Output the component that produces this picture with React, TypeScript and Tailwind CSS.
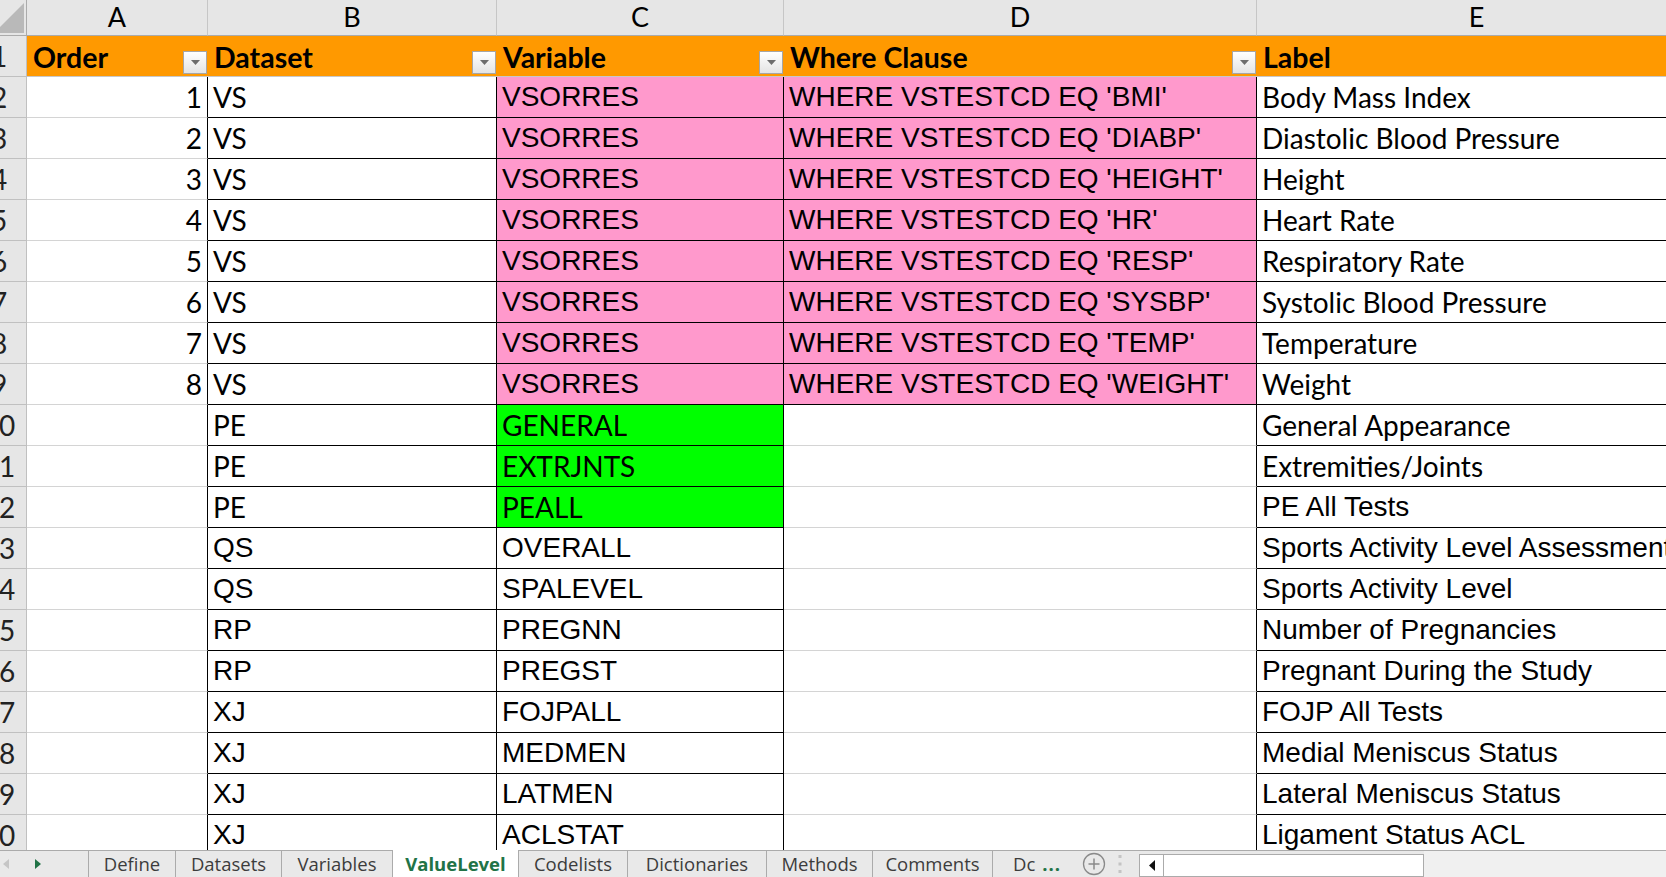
import React from "react";

const CAL = "font-['Lato',sans-serif] text-[28px]";
const ARI = "font-['Liberation_Sans',Arial,sans-serif] text-[28px]";

type F = "c" | "a";
type Row = {
  a?: string;
  b: string;
  c: string;
  d?: string;
  e: string;
  bf: F;
  cf: F;
  ef: F;
  fill?: "pink" | "green";
};

const rows: Row[] = [
  { a: "1", b: "VS", c: "VSORRES", d: "WHERE VSTESTCD EQ 'BMI'", e: "Body Mass Index", bf: "c", cf: "a", ef: "c", fill: "pink" },
  { a: "2", b: "VS", c: "VSORRES", d: "WHERE VSTESTCD EQ 'DIABP'", e: "Diastolic Blood Pressure", bf: "c", cf: "a", ef: "c", fill: "pink" },
  { a: "3", b: "VS", c: "VSORRES", d: "WHERE VSTESTCD EQ 'HEIGHT'", e: "Height", bf: "c", cf: "a", ef: "c", fill: "pink" },
  { a: "4", b: "VS", c: "VSORRES", d: "WHERE VSTESTCD EQ 'HR'", e: "Heart Rate", bf: "c", cf: "a", ef: "c", fill: "pink" },
  { a: "5", b: "VS", c: "VSORRES", d: "WHERE VSTESTCD EQ 'RESP'", e: "Respiratory Rate", bf: "c", cf: "a", ef: "c", fill: "pink" },
  { a: "6", b: "VS", c: "VSORRES", d: "WHERE VSTESTCD EQ 'SYSBP'", e: "Systolic Blood Pressure", bf: "c", cf: "a", ef: "c", fill: "pink" },
  { a: "7", b: "VS", c: "VSORRES", d: "WHERE VSTESTCD EQ 'TEMP'", e: "Temperature", bf: "c", cf: "a", ef: "c", fill: "pink" },
  { a: "8", b: "VS", c: "VSORRES", d: "WHERE VSTESTCD EQ 'WEIGHT'", e: "Weight", bf: "c", cf: "a", ef: "c", fill: "pink" },
  { b: "PE", c: "GENERAL", e: "General Appearance", bf: "c", cf: "c", ef: "c", fill: "green" },
  { b: "PE", c: "EXTRJNTS", e: "Extremities/Joints", bf: "c", cf: "c", ef: "c", fill: "green" },
  { b: "PE", c: "PEALL", e: "PE All Tests", bf: "c", cf: "c", ef: "a", fill: "green" },
  { b: "QS", c: "OVERALL", e: "Sports Activity Level Assessment", bf: "a", cf: "a", ef: "a" },
  { b: "QS", c: "SPALEVEL", e: "Sports Activity Level", bf: "a", cf: "a", ef: "a" },
  { b: "RP", c: "PREGNN", e: "Number of Pregnancies", bf: "a", cf: "a", ef: "a" },
  { b: "RP", c: "PREGST", e: "Pregnant During the Study", bf: "a", cf: "a", ef: "a" },
  { b: "XJ", c: "FOJPALL", e: "FOJP All Tests", bf: "a", cf: "a", ef: "a" },
  { b: "XJ", c: "MEDMEN", e: "Medial Meniscus Status", bf: "a", cf: "a", ef: "a" },
  { b: "XJ", c: "LATMEN", e: "Lateral Meniscus Status", bf: "a", cf: "a", ef: "a" },
  { b: "XJ", c: "ACLSTAT", e: "Ligament Status ACL", bf: "a", cf: "a", ef: "a" },
];

const fnt = (f: F) => (f === "c" ? CAL : ARI);

function FilterBtn() {
  return (
    <div className="absolute right-[1px] bottom-[2px] w-[24px] h-[23px] border border-[#a6a6a6] bg-gradient-to-b from-white to-[#e4e4e4] flex items-center justify-center">
      <svg width="9" height="5" viewBox="0 0 9 5">
        <polygon points="0,0 9,0 4.5,5" fill="#6d6d6d" />
      </svg>
    </div>
  );
}

function HeadCell({ label }: { label: string }) {
  return (
    <div className="relative h-[41px] bg-[#ff9900] border-b border-[#c8c8c8] flex items-end pl-[6px] pb-[5px] overflow-hidden">
      <span className="font-['Lato',sans-serif] text-[28.5px] font-bold text-black leading-none whitespace-nowrap">{label}</span>
      {label !== "Label" && <FilterBtn />}
    </div>
  );
}

function RowNum({ n }: { n: number }) {
  return (
    <div className="h-[41px] bg-[#e6e6e6] border-r border-b border-[#c0c0c0] overflow-hidden flex items-end pb-[6px]">
      <div className={`${CAL} w-[54px] -ml-[28px] shrink-0 text-center leading-none text-[#222]`}>{n}</div>
    </div>
  );
}

export default function App() {
  const cell = "h-[41px] flex items-end pb-[6px] px-[5px] overflow-hidden whitespace-nowrap leading-none text-black";
  return (
    <div className="w-[1666px] h-[877px] overflow-hidden bg-white flex flex-col">
      <div className="h-[850px] overflow-hidden">
        <div className="grid grid-cols-[27px_181px_289px_287px_473px_440px] w-max">
          {/* column letters */}
          <div className="h-[36px] bg-[#e6e6e6] border-r border-b border-[#ababab] relative overflow-hidden">
            <svg className="absolute left-0 top-0" width="27" height="36" viewBox="0 0 27 36">
              <polygon points="24,3 24,33 -6,33" fill="#b9b9b9" />
            </svg>
          </div>
          {["A", "B", "C", "D", "E"].map((l) => (
            <div
              key={l}
              className="h-[36px] bg-[#e6e6e6] border-r border-r-[#c6c6c6] border-b border-b-[#ababab] flex items-end justify-center pb-[5px] font-['Lato',sans-serif] text-[27px] leading-none text-black"
            >
              {l}
            </div>
          ))}

          {/* header row */}
          <RowNum n={1} />
          <HeadCell label="Order" />
          <HeadCell label="Dataset" />
          <HeadCell label="Variable" />
          <HeadCell label="Where Clause" />
          <HeadCell label="Label" />

          {rows.map((r, i) => {
            const bg = r.fill === "pink" ? "bg-[#ff99cc]" : r.fill === "green" ? "bg-[#00ff00]" : "bg-white";
            return (
              <React.Fragment key={i}>
                <RowNum n={i + 2} />
                <div className={`${cell} ${CAL} justify-end border-r border-r-black border-b border-b-[#d4d4d4]`}>{r.a}</div>
                <div className={`${cell} ${fnt(r.bf)} border-r border-b border-black`}>{r.b}</div>
                <div className={`${cell} ${fnt(r.cf)} ${bg} border-r border-b border-black`}>{r.c}</div>
                {r.d ? (
                  <div className={`${cell} ${ARI} ${bg} border-r border-b border-black`}>{r.d}</div>
                ) : (
                  <div className={`${cell} border-r border-r-black border-b border-b-[#d4d4d4]`} />
                )}
                <div className={`${cell} ${fnt(r.ef)} border-b border-black`}>{r.e}</div>
              </React.Fragment>
            );
          })}
        </div>
      </div>

      {/* sheet tab bar */}
      <div className="h-[27px] flex bg-[#e9e9e9] border-t border-[#ababab] font-['Open_Sans',sans-serif] text-[18.5px] text-[#3c3c3c]">
        <div className="w-[89px] shrink-0 border-r border-[#ababab] flex items-center">
          <svg className="ml-[3px]" width="6" height="10" viewBox="0 0 6 10">
            <polygon points="6,0 6,10 0,5" fill="#c6c6c6" />
          </svg>
          <svg className="ml-[26px]" width="6" height="10" viewBox="0 0 6 10">
            <polygon points="0,0 0,10 6,5" fill="#217346" />
          </svg>
        </div>
        {[
          ["Define", "w-[87px]"],
          ["Datasets", "w-[106px]"],
          ["Variables", "w-[111px]"],
          ["ValueLevel", "w-[126px]"],
          ["Codelists", "w-[109px]"],
          ["Dictionaries", "w-[139px]"],
          ["Methods", "w-[106px]"],
          ["Comments", "w-[120px]"],
        ].map(([t, w]) =>
          t === "ValueLevel" ? (
            <div key={t} className={`${w} shrink-0 -mt-px bg-white border-r border-[#ababab] flex items-center justify-center font-bold text-[#217346]`}>
              {t}
            </div>
          ) : (
            <div key={t} className={`${w} shrink-0 border-r border-[#ababab] flex items-center justify-center`}>
              {t}
            </div>
          )
        )}
        <div className="w-[146px] shrink-0 flex items-center">
          <span className="ml-[20px]">Dc</span>
          <span className="ml-[7px] text-[#217346] font-bold tracking-[1px]">...</span>
          <svg className="ml-auto" width="24" height="24" viewBox="0 0 24 24">
            <circle cx="12" cy="12" r="10.5" fill="none" stroke="#8a8a8a" strokeWidth="1.3" />
            <path d="M12 6.5v11M6.5 12h11" stroke="#8a8a8a" strokeWidth="1.5" />
          </svg>
          <svg className="ml-[12px] mr-[17px]" width="4" height="22" viewBox="0 0 4 22">
            <rect x="0.5" y="2" width="3" height="3" fill="#c4c4c4" />
            <rect x="0.5" y="9.5" width="3" height="3" fill="#c4c4c4" />
            <rect x="0.5" y="17" width="3" height="3" fill="#c4c4c4" />
          </svg>
        </div>
        <div className="mt-[3px] w-[25px] shrink-0 bg-white border border-[#ababab] flex items-center justify-center">
          <svg width="6" height="11" viewBox="0 0 6 11">
            <polygon points="6,0 6,11 0,5.5" fill="#111" />
          </svg>
        </div>
        <div className="mt-[3px] w-[260px] shrink-0 bg-white border border-l-0 border-[#ababab]" />
        <div className="flex-1 bg-[#f0f0f0]" />
      </div>
    </div>
  );
}
